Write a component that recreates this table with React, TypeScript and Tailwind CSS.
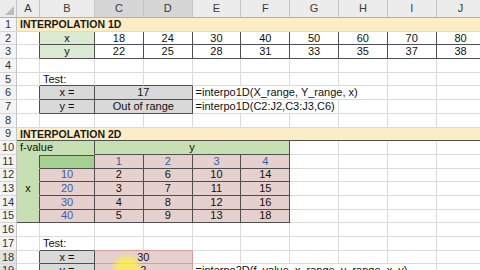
import React from "react";

type Line = "grid" | "dark" | "red" | "clear";
type Fill = "none" | "yellow" | "gray" | "pale" | "green" | "deep" | "pink";

type Cell = {
  col: number;
  span?: number;
  text?: string;
  fill?: Fill;
  align?: "l" | "c";
  bold?: boolean;
  blue?: boolean;
  rb?: Line;
  bb?: Line;
  extra?: string;
};

const rightLine: Record<Line, string> = {
  grid: "border-r-[#dadada]",
  dark: "border-r-[#4f4f4f]",
  red: "border-r-[#d59c9c]",
  clear: "border-r-transparent",
};

const bottomLine: Record<Line, string> = {
  grid: "border-b-[#dadada]",
  dark: "border-b-[#4f4f4f]",
  red: "border-b-[#d59c9c]",
  clear: "border-b-transparent",
};

const fills: Record<Fill, string> = {
  none: "bg-white",
  yellow: "bg-[#fcedc6]",
  gray: "bg-[#d9d9d9]",
  pale: "bg-[#dbead2]",
  green: "bg-[#c6e0b4]",
  deep: "bg-[#a6cf92]",
  pink: "bg-[#e6d0cd]",
};

const spans: Record<number, string> = {
  1: "col-span-1",
  2: "col-span-2",
  3: "col-span-3",
  4: "col-span-4",
  5: "col-span-5",
  6: "col-span-6",
  7: "col-span-7",
  8: "col-span-8",
  9: "col-span-9",
  10: "col-span-10",
};

const letters = ["A", "B", "C", "D", "E", "F", "G", "H", "I", "J"];

// bordered ranges, rows are 1-based, columns 0 = A
const boxes: { r1: number; r2: number; c1: number; c2: number; k: Line }[] = [
  { r1: 2, r2: 3, c1: 1, c2: 9, k: "dark" },
  { r1: 6, r2: 7, c1: 1, c2: 3, k: "dark" },
  { r1: 10, r2: 15, c1: 0, c2: 5, k: "dark" },
  { r1: 18, r2: 19, c1: 1, c2: 1, k: "dark" },
  { r1: 18, r2: 19, c1: 2, c2: 3, k: "red" },
];

const boxAt = (r: number, c: number) =>
  boxes.find((b) => r >= b.r1 && r <= b.r2 && c >= b.c1 && c <= b.c2)?.k;

const xs = ["18", "24", "30", "40", "50", "60", "70", "80"];
const ys = ["22", "25", "28", "31", "33", "35", "37", "38"];
const fvals = [
  ["10", "2", "6", "10", "14"],
  ["20", "3", "7", "11", "15"],
  ["30", "4", "8", "12", "16"],
  ["40", "5", "9", "13", "18"],
];

const sheet: Record<number, Cell[]> = {
  1: [{ col: 0, span: 10, text: "INTERPOLATION 1D", fill: "yellow", bold: true }],
  2: [
    { col: 1, text: "x", fill: "pale", align: "c" },
    ...xs.map((v, i) => ({ col: i + 2, text: v, align: "c" as const })),
  ],
  3: [
    { col: 1, text: "y", fill: "pale", align: "c" },
    ...ys.map((v, i) => ({ col: i + 2, text: v, align: "c" as const })),
  ],
  5: [{ col: 1, text: "Test:" }],
  6: [
    { col: 1, text: "x =", fill: "gray", align: "c" },
    { col: 2, span: 2, text: "17", fill: "gray", align: "c" },
    { col: 4, span: 4, text: "=interpo1D(X_range, Y_range, x)" },
  ],
  7: [
    { col: 1, text: "y =", fill: "gray", align: "c" },
    { col: 2, span: 2, text: "Out of range", fill: "gray", align: "c" },
    { col: 4, span: 3, text: "=interpo1D(C2:J2,C3:J3,C6)" },
  ],
  9: [{ col: 0, span: 10, text: "INTERPOLATION 2D", fill: "yellow", bold: true }],
  10: [
    { col: 0, span: 2, text: "f-value", fill: "green", bb: "clear" },
    { col: 2, span: 4, text: "y", fill: "green", align: "c" },
  ],
  11: [
    { col: 0, fill: "green", bb: "clear" },
    { col: 1, fill: "deep", extra: "border-t border-t-[#4f4f4f]" },
    ...["1", "2", "3", "4"].map((v, i) => ({
      col: i + 2,
      text: v,
      fill: "pink" as const,
      align: "c" as const,
      blue: true,
    })),
  ],
  ...Object.fromEntries(
    fvals.map((row, j) => [
      12 + j,
      [
        { col: 0, text: j === 1 ? "x" : "", fill: "green", align: "c", bb: j < 3 ? "clear" : undefined },
        { col: 1, text: row[0], fill: "pink", align: "c", blue: true },
        ...row.slice(1).map((v, i) => ({ col: i + 2, text: v, fill: "pink", align: "c" })),
      ] as Cell[],
    ])
  ),
  17: [{ col: 1, text: "Test:" }],
  18: [
    { col: 1, text: "x =", fill: "gray", align: "c" },
    { col: 2, span: 2, text: "30", fill: "pink", align: "c" },
  ],
  19: [
    { col: 1, text: "y =", fill: "gray", align: "c" },
    { col: 2, span: 2, text: "2", fill: "pink", align: "c" },
    { col: 4, span: 5, text: "=interpo2D(f_value, x_range, y_range, x, y)" },
  ],
};

// pad a row with empty cells for every column nothing covers
function fullRow(cells: Cell[] = []): Cell[] {
  const out: Cell[] = [];
  let c = 0;
  const sorted = [...cells].sort((a, b) => a.col - b.col);
  for (const cell of sorted) {
    while (c < cell.col) out.push({ col: c++ });
    out.push(cell);
    c = cell.col + (cell.span ?? 1);
  }
  while (c < 10) out.push({ col: c++ });
  return out;
}

const gridCols = "grid grid-cols-[17px_23px_55px_repeat(7,48.8px)_49px]";

function SheetCell({ r, cell }: { r: number; cell: Cell }) {
  const span = cell.span ?? 1;
  const right =
    cell.rb ??
    (cell.fill === "yellow" ? "clear" : undefined) ??
    boxAt(r, cell.col + span - 1) ??
    boxAt(r, cell.col + span) ??
    "grid";
  const bottom = cell.bb ?? boxAt(r, cell.col) ?? boxAt(r + 1, cell.col) ?? "grid";

  return (
    <div
      className={`${spans[span]} ${fills[cell.fill ?? "none"]} ${rightLine[right]} ${bottomLine[bottom]} ${
        cell.extra ?? ""
      } flex items-center overflow-visible whitespace-nowrap border-r border-b leading-none ${
        cell.align === "c" ? "justify-center" : "justify-start pl-[3px]"
      } ${cell.bold ? "font-bold text-[10.5px] text-[#1a1a1a]" : ""} ${
        cell.blue ? "text-[#3b5ca8]" : ""
      }`}
    >
      {cell.text}
    </div>
  );
}

export default function App() {
  const rows = Array.from({ length: 19 }, (_, i) => i + 1);

  return (
    <div className="relative h-[270px] w-[480px] overflow-hidden bg-white font-['Liberation_Sans',Arial,sans-serif] text-[11px] text-[#111]">
      <div className={`${gridCols} h-[18px]`}>
        <div className="flex items-end justify-end border-r border-b border-r-[#c4c4c4] border-b-[#b0b0b0] bg-[#ececec] p-[2px]">
          <svg width="9" height="9" viewBox="0 0 9 9">
            <path d="M9 0 L9 9 L0 9 Z" fill="#bdbdbd" />
          </svg>
        </div>
        {letters.map((l, i) => (
          <div
            key={l}
            className={`flex items-center justify-center border-r border-b border-r-[#c4c4c4] border-b-[#b0b0b0] text-[#3a3a3a] ${
              i === 2 || i === 3 ? "bg-[#d6d6d6]" : "bg-[#ececec]"
            }`}
          >
            {l}
          </div>
        ))}
      </div>

      {rows.map((r) => (
        <div key={r} className={`${gridCols} h-[13.7px]`}>
          <div
            className={`flex items-center justify-center border-r border-b border-r-[#c4c4c4] border-b-[#d6d6d6] leading-none text-[#333] ${
              r >= 18 ? "bg-[#e2e2e2]" : "bg-[#f4f4f4]"
            }`}
          >
            {r}
          </div>
          {fullRow(sheet[r]).map((cell) => (
            <SheetCell key={cell.col} r={r} cell={cell} />
          ))}
        </div>
      ))}

      {/* pointer highlight */}
      <div className="absolute left-[114px] top-[256px] h-[26px] w-[26px] rounded-full bg-[#fff04a]/75 blur-[2px]" />
    </div>
  );
}
